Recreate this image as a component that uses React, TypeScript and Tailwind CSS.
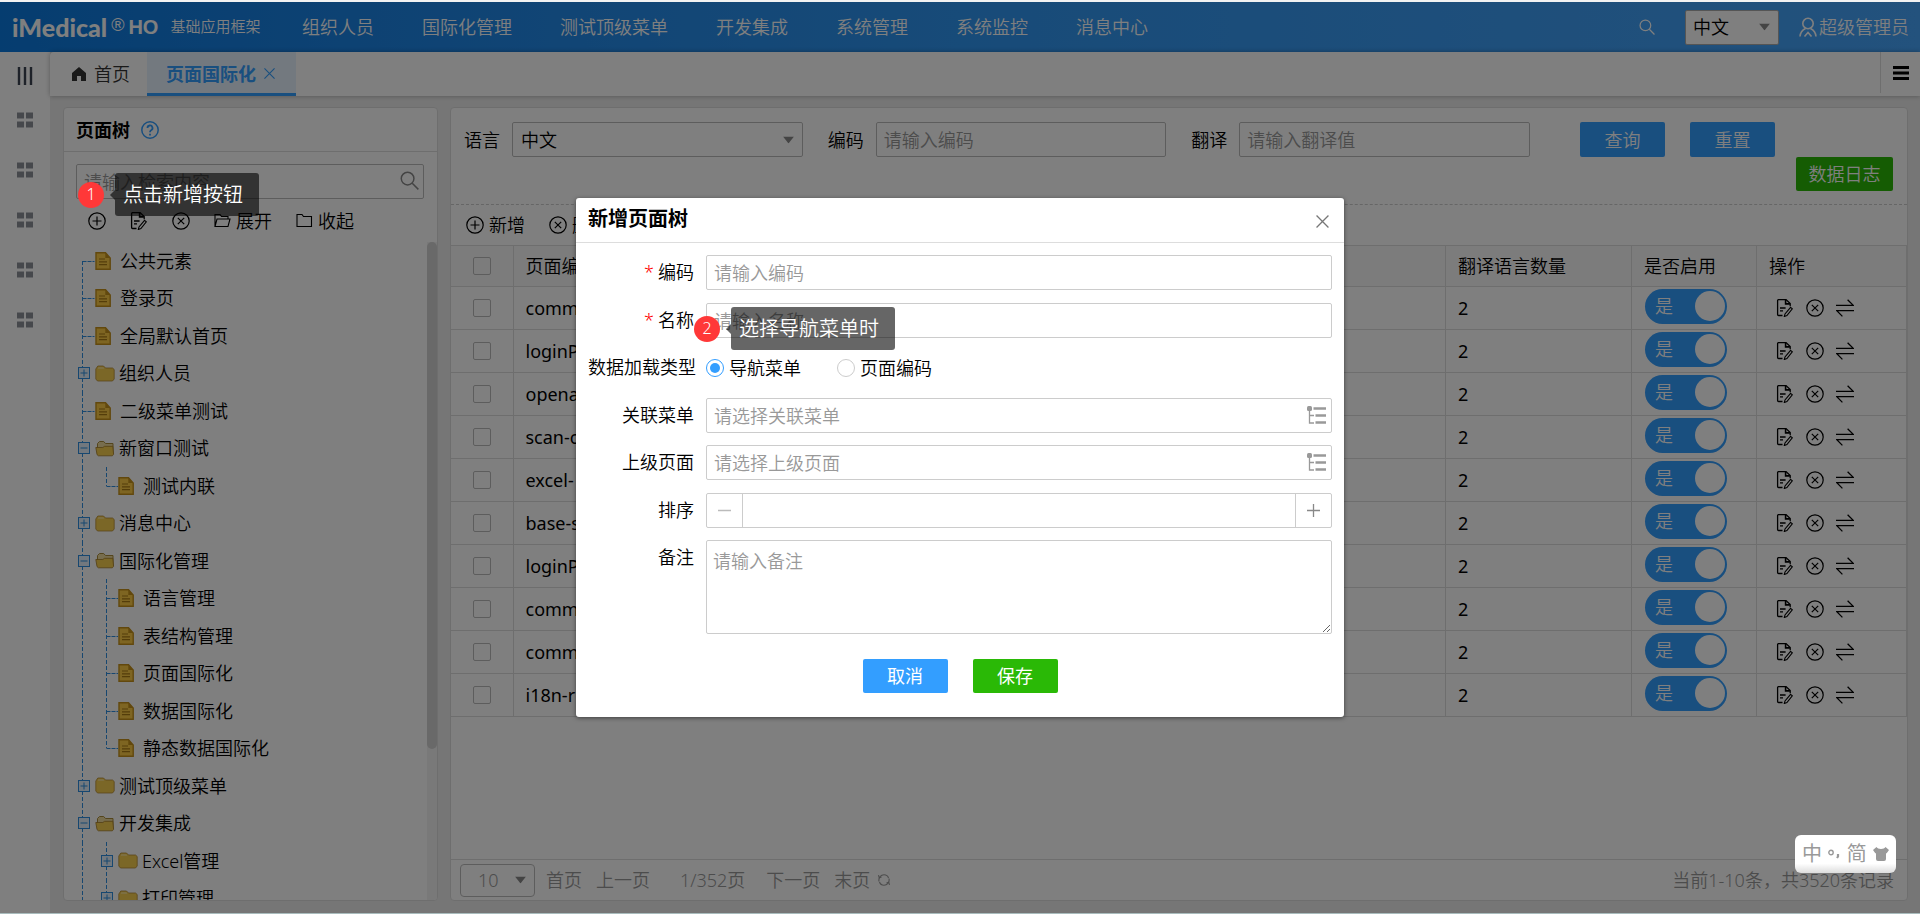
import { useState } from "react";
import type { ReactNode } from "react";

type TreeItem = {
  label: string;
  depth: 0 | 1;
  kind: "doc" | "closed" | "open";
  first?: boolean;
  last?: boolean;
};

const navItems = ["组织人员", "国际化管理", "测试顶级菜单", "开发集成", "系统管理", "系统监控", "消息中心"];

const treeItems: TreeItem[] = [
  { label: "公共元素", depth: 0, kind: "doc", first: true },
  { label: "登录页", depth: 0, kind: "doc" },
  { label: "全局默认首页", depth: 0, kind: "doc" },
  { label: "组织人员", depth: 0, kind: "closed" },
  { label: "二级菜单测试", depth: 0, kind: "doc" },
  { label: "新窗口测试", depth: 0, kind: "open" },
  { label: "测试内联", depth: 1, kind: "doc", last: true },
  { label: "消息中心", depth: 0, kind: "closed" },
  { label: "国际化管理", depth: 0, kind: "open" },
  { label: "语言管理", depth: 1, kind: "doc" },
  { label: "表结构管理", depth: 1, kind: "doc" },
  { label: "页面国际化", depth: 1, kind: "doc" },
  { label: "数据国际化", depth: 1, kind: "doc" },
  { label: "静态数据国际化", depth: 1, kind: "doc", last: true },
  { label: "测试顶级菜单", depth: 0, kind: "closed" },
  { label: "开发集成", depth: 0, kind: "open" },
  { label: "Excel管理", depth: 1, kind: "closed" },
  { label: "打印管理", depth: 1, kind: "closed" },
];

const rows = ["comm", "loginP", "opena", "scan-c", "excel-", "base-s", "loginP", "comm", "comm", "i18n-r"];

function PlusCircle() {
  return (
    <svg aria-hidden="true" viewBox="0 0 18 18" className="h-[18px] w-[18px] shrink-0" fill="none" stroke="currentColor" strokeWidth="1.2">
      <circle cx="9" cy="9" r="8.2" />
      <path d="M9 4.5v9M4.5 9h9" />
    </svg>
  );
}

function CrossCircle() {
  return (
    <svg aria-hidden="true" viewBox="0 0 18 18" className="h-[18px] w-[18px] shrink-0" fill="none" stroke="currentColor" strokeWidth="1.2">
      <circle cx="9" cy="9" r="8.2" />
      <path d="M5.8 5.8l6.4 6.4M12.2 5.8l-6.4 6.4" />
    </svg>
  );
}

function EditIcon() {
  return (
    <svg aria-hidden="true" viewBox="0 0 18 18" className="h-[18px] w-[18px] shrink-0" fill="none" stroke="currentColor" strokeWidth="1.3">
      <path d="M6.5 16.5H2.6a1 1 0 0 1-1-1V1.6a1 1 0 0 1 1-1H10l4.2 4v2.6" />
      <path d="M9.6 .8v4.1h4.3" strokeWidth="1.6" />
      <path d="M4 9h5.6M4 11.8h3" />
      <path d="M14.6 8.4l1.7 1.5-5.4 6.6-2.6 1 .7-2.6z" strokeWidth="1.1" />
    </svg>
  );
}

function SwapIcon() {
  return (
    <svg aria-hidden="true" viewBox="0 0 18 18" className="h-[18px] w-[18px] shrink-0" fill="none" stroke="currentColor" strokeWidth="1.3">
      <path d="M0 6.4h17.3L11.6.8M18 11.6H.8l5.6 5.8" />
    </svg>
  );
}

function FolderLine({ open }: { open?: boolean }) {
  return (
    <svg aria-hidden="true" viewBox="0 0 17 15" className="h-[15px] w-[17px] shrink-0" fill="none" stroke="currentColor" strokeWidth="1.1">
      {open ? (
        <path d="M1 13.5V1.5h5l1.5 2h6.5v2.5M1 13.5l2-7.5h13l-2 7.5z" />
      ) : (
        <path d="M1 13.5V1.5h5l1.5 2H15.5v10z" />
      )}
    </svg>
  );
}

function SearchIcon({ className }: { className: string }) {
  return (
    <svg aria-hidden="true" viewBox="0 0 18 18" className={className} fill="none" stroke="currentColor" strokeWidth="1.4">
      <circle cx="7.2" cy="7.2" r="6" />
      <path d="M11.6 11.6l5.8 5.8" />
    </svg>
  );
}

function CloseIcon({ className }: { className: string }) {
  return (
    <svg aria-hidden="true" viewBox="0 0 12 12" className={className} fill="none" stroke="currentColor" strokeWidth="1.2">
      <path d="M.5.5l11 11M11.5.5l-11 11" />
    </svg>
  );
}

function GridIcon() {
  return (
    <svg aria-hidden="true" viewBox="0 0 16 16" className="h-4 w-4" fill="currentColor">
      <path d="M0 .5h7v6H0zM9 .5h7v6H9zM0 9.5h7v6H0zM9 9.5h7v6H9z" />
    </svg>
  );
}

function Caret({ className }: { className?: string }) {
  return (
    <svg aria-hidden="true" viewBox="0 0 11 7" className={`pointer-events-none absolute top-1/2 h-[7px] w-[11px] -translate-y-1/2 ${className ?? ""}`}>
      <path d="M0 0h11L5.5 7z" fill="#888" />
    </svg>
  );
}

function TreeSelectIcon() {
  return (
    <svg aria-hidden="true" viewBox="0 0 20 20" className="h-5 w-5" fill="none" stroke="#999">
      <rect x="0" y="1" width="5" height="5" rx="1.5" fill="#999" stroke="none" />
      <path d="M2.5 4v14H7M2.5 10.5H7" strokeWidth="1.3" />
      <path d="M6.5 3.5H19M8.5 10.5H19M8.5 17.5H19" strokeWidth="2.6" />
    </svg>
  );
}

// dashed guide lines and the +/- box in front of a tree node
function TreeGuide({ item }: { item: TreeItem }) {
  const x = item.depth === 0 ? 6.5 : 30.5;
  const boxX = item.depth === 0 ? 2.5 : 25.5;
  const width = item.depth === 0 ? "w-[19px]" : "w-[42px]";
  return (
    <svg aria-hidden="true" className={`h-full shrink-0 ${width}`} fill="none" stroke="#2f8fe0">
      <path d={item.first ? "M6.5 19V38" : "M6.5 0V38"} strokeDasharray="4 2" />
      {item.depth === 1 && <path d={item.last ? "M30.5 0V19" : "M30.5 0V38"} strokeDasharray="4 2" />}
      {item.kind === "doc" ? (
        <path d={`M${x} 19.5h12`} strokeDasharray="4 1" />
      ) : (
        <>
          <rect x={boxX} y="13.5" width="11" height="11" fill="#e4f1fd" />
          <path d={`M${boxX + 2} 19h7`} />
          {item.kind === "closed" && <path d={`M${boxX + 5.5} 15.5v7`} />}
        </>
      )}
    </svg>
  );
}

function DocIcon() {
  return (
    <svg aria-hidden="true" viewBox="0 0 16 18" className="mr-[9px] h-[18px] w-4 shrink-0">
      <path d="M1 .8h9.5L15.2 6v11.2H1z" fill="#fccb45" stroke="#c4901a" strokeWidth="1.4" />
      <path d="M10.3 1v5H15z" fill="#c4901a" />
      <path d="M4 7h6M4 9.8h8M4 12.6h8" stroke="#a87a14" strokeWidth="1.2" />
    </svg>
  );
}

function FolderIcon({ open }: { open: boolean }) {
  return (
    <svg aria-hidden="true" viewBox="0 0 20 17" className="mr-1 h-[17px] w-5 shrink-0">
      {open ? (
        <>
          <path d="M2.5 8V3.5l2-2h4.2l1.8 2h7.5V14" fill="#efdb9c" stroke="#a88a3a" />
          <path d="M.8 7.5h7l1.8-1.2h8.2l.8 8-1.2 1.5H3.4L2 14.6z" fill="#f7ce4e" stroke="#a57c28" strokeWidth=".8" />
        </>
      ) : (
        <>
          <path d="M.8 4l2-3h5.700L10.5 3H17.500l1.7 1.5V14L17.500 16H2.500L.8 14z" fill="#f7ce4e" stroke="#b48a35" strokeWidth=".8" />
          <path d="M3.3 2.6h5l1 1H2.800z" fill="#fff0b8" />
        </>
      )}
    </svg>
  );
}

function Callout({ n, children, className }: { n: number; children: ReactNode; className: string }) {
  return (
    <div className={`pointer-events-none absolute z-20 flex items-center ${className}`}>
      <span className="flex h-[26px] w-[26px] items-center justify-center rounded-full bg-[#ff3838] pb-0.5 text-base leading-none font-[350] text-white">
        {n}
      </span>
      <svg aria-hidden="true" viewBox="0 0 5 10" className="ml-1.5 h-2.5 w-[5px]">
        <path d="M5 0v10L0 5z" fill="#000" fillOpacity=".6" />
      </svg>
      <span className="h-[43px] rounded-[3px] bg-black/60 pr-4 pl-2 text-xl leading-[43px] whitespace-nowrap text-white">
        {children}
      </span>
    </div>
  );
}

function Header() {
  return (
    <header className="flex h-[50px] shrink-0 items-center bg-linear-to-r from-[#0b7ae0] via-[#2f96f2] to-[#46a4fa] pr-[11px] pl-3 text-lg text-white">
      <div className="flex w-[290px] shrink-0 items-center whitespace-nowrap">
        <span className="font-['Lato',sans-serif] text-[25px] font-black">iMedical</span>
        <span className="mb-1 ml-1 font-['Liberation_Sans',sans-serif] text-lg">®</span>
        <span className="ml-1 font-['Liberation_Sans',sans-serif] text-xl font-bold">HO</span>
        <span className="ml-3 text-[15px]">基础应用框架</span>
      </div>
      <nav className="flex flex-1 gap-12 whitespace-nowrap">
        {navItems.map((name) => (
          <a key={name} href="#">
            {name}
          </a>
        ))}
      </nav>
      <button type="button" aria-label="搜索" className="mr-[30px]">
        <SearchIcon className="h-4 w-4" />
      </button>
      <div className="relative mr-5">
        <select aria-label="界面语言" className="h-[35px] w-[94px] appearance-none rounded-xs border border-[#aaa] bg-white pl-[7px] text-black">
          <option>中文</option>
        </select>
        <Caret className="right-[9px]" />
      </div>
      <a href="#" className="flex items-center gap-0.5">
        <svg aria-hidden="true" viewBox="0 0 18 20" className="h-5 w-[18px]" fill="none" stroke="currentColor" strokeWidth="1.6">
          <circle cx="9" cy="6.5" r="5.2" />
          <path d="M6.5 11.5C3.5 13 1.3 15.5 1 19.5M11.5 11.5c3 1.5 5.2 4 5.5 8M5.5 19.5L9 15.5l3.5 4" />
        </svg>
        超级管理员
      </a>
    </header>
  );
}

function SideBar() {
  return (
    <aside className="flex w-[50px] shrink-0 flex-col items-center bg-white pt-[15px] text-[#8d9199]">
      <button type="button" aria-label="展开菜单" className="mb-[27px] text-[#3d4452]">
        <svg aria-hidden="true" viewBox="0 0 16 18" className="h-[18px] w-4" stroke="currentColor" strokeWidth="2.4">
          <path d="M2 0v18M8 0v18M14 0v18" />
        </svg>
      </button>
      <div className="flex flex-col gap-[34px]">
        {[1, 2, 3, 4, 5].map((n) => (
          <button key={n} type="button" aria-label={`菜单${n}`}>
            <GridIcon />
          </button>
        ))}
      </div>
    </aside>
  );
}

function TabBar() {
  return (
    <div className="flex h-11 shrink-0 rounded-tl bg-white text-lg shadow-[0_0_5px_rgba(0,0,0,0.3)]">
      <div className="flex w-[97px] items-center gap-2 pl-[22px] text-[#333]">
        <svg aria-hidden="true" viewBox="0 0 14 14" className="h-[14px] w-[14px]" fill="currentColor">
          <path d="M7 0l7 6v8H9V9H5v5H0V6z" />
        </svg>
        <a href="#">首页</a>
      </div>
      <div className="flex w-[149px] items-center border-b-3 border-[#339eff] bg-[#e6f3ff] pl-[19px] text-[#339eff]">
        <a href="#" className="pt-[3px] font-bold">
          页面国际化
        </a>
        <button type="button" aria-label="关闭标签" className="ml-2 pt-0.5">
          <CloseIcon className="h-[11px] w-[11px]" />
        </button>
      </div>
      <button type="button" aria-label="标签菜单" className="mb-[3px] ml-auto flex w-10 items-center justify-center border-l border-[#ddd]">
        <svg aria-hidden="true" viewBox="0 0 16 14" className="h-[14px] w-4" stroke="#000" strokeWidth="3">
          <path d="M0 1.5h16M0 7h16M0 12.5h16" />
        </svg>
      </button>
    </div>
  );
}

function TreePanel() {
  return (
    <section className="flex w-[375px] shrink-0 flex-col overflow-hidden rounded border border-[#ddd] bg-white">
      <div className="flex h-11 shrink-0 items-center border-b border-[#ddd] pl-3">
        <h2 className="text-lg font-bold">页面树</h2>
        <svg aria-hidden="true" viewBox="0 0 18 18" className="ml-[11px] h-[18px] w-[18px]" fill="none" stroke="#339eff" strokeWidth="1.5">
          <circle cx="9" cy="9" r="8.2" />
          <path d="M6.5 7a2.5 2.5 0 1 1 3.6 2.2Q9 9.8 9 11.2M9 12.8v1.6" strokeWidth="1.8" />
        </svg>
      </div>
      <div className="relative mt-3 mr-[13px] ml-3">
        <input
          type="text"
          aria-label="检索内容"
          placeholder="请输入检索内容"
          className="h-[35px] w-full rounded-xs border border-[#bbb] pl-[7px] text-lg placeholder:text-[#999]"
        />
        <SearchIcon className="absolute top-[7px] right-[5px] h-[19px] w-[19px] text-[#888]" />
      </div>
      <div className="flex h-[43px] shrink-0 items-center pl-6 text-lg">
        <button type="button" aria-label="新增"><PlusCircle /></button>
        <button type="button" aria-label="编辑" className="ml-6"><EditIcon /></button>
        <button type="button" aria-label="删除" className="ml-6"><CrossCircle /></button>
        <button type="button" className="ml-6 flex items-center gap-[5px]"><FolderLine open />展开</button>
        <button type="button" className="ml-6 flex items-center gap-[5px]"><FolderLine />收起</button>
      </div>
      <div className="flex min-h-0 flex-1">
        <ul className="min-w-0 flex-1 overflow-hidden pl-3 text-lg">
          {treeItems.map((item) => (
            <li key={`${item.depth}-${item.label}`} className="flex items-center odd:h-[37px] even:h-[38px]">
              <TreeGuide item={item} />
              {item.kind === "doc" ? <DocIcon /> : <FolderIcon open={item.kind === "open"} />}
              <span className="leading-6">{item.label}</span>
            </li>
          ))}
        </ul>
        <div className="w-[10px] bg-[#f3f3f3]">
          <div className="h-[77%] rounded-full bg-[#d2d2d2]" />
        </div>
      </div>
    </section>
  );
}

function TextField({ id, label, placeholder }: { id: string; label: string; placeholder: string }) {
  return (
    <div className="flex flex-1 items-center gap-3">
      <label htmlFor={id} className="shrink-0">{label}</label>
      <input
        id={id}
        type="text"
        placeholder={placeholder}
        className="h-[35px] w-full min-w-0 rounded-xs border border-[#bbb] pl-[7px] placeholder:text-[#999]"
      />
    </div>
  );
}

function DataTable() {
  return (
    <table className="w-full table-fixed border-collapse text-left text-lg">
      <thead>
        <tr className="h-[41px] border-y border-[#ddd] bg-[#f8f8f8]">
          <th className="w-[62px] border-r border-[#ddd]">
            <input type="checkbox" aria-label="全选" className="mx-auto block h-[18px] w-[18px] appearance-none rounded-xs border border-[#bbb]" />
          </th>
          <th className="border-r border-[#ddd] pl-3 font-[350]">页面编码</th>
          <th className="w-[186px] border-r border-[#ddd] pl-3 font-[350]">翻译语言数量</th>
          <th className="w-[125px] border-r border-[#ddd] pl-3 font-[350]">是否启用</th>
          <th className="w-[150px] border-r border-[#ddd] pl-3 font-[350]">操作</th>
        </tr>
      </thead>
      <tbody>
        {rows.map((code, i) => (
          <tr key={i} className="h-[43px] border-b border-[#ddd]">
            <td className="border-r border-[#ddd]">
              <input type="checkbox" aria-label={`选择${code}`} className="mx-auto block h-[18px] w-[18px] appearance-none rounded-xs border border-[#bbb]" />
            </td>
            <td className="border-r border-[#ddd] pl-3 font-normal">{code}</td>
            <td className="border-r border-[#ddd] pl-3 font-normal">2</td>
            <td className="border-r border-[#ddd] pb-1 pl-[13px]">
              <button
                type="button"
                role="switch"
                aria-checked="true"
                className="flex h-[35px] w-[82px] items-center justify-between rounded-full bg-[#339eff] pr-0.5 pl-2.5 text-white"
              >
                是<span className="h-[30px] w-[30px] rounded-full bg-white" />
              </button>
            </td>
            <td className="border-r border-[#ddd] pl-[19px]">
              <div className="flex gap-3">
                <button type="button" aria-label="编辑"><EditIcon /></button>
                <button type="button" aria-label="删除"><CrossCircle /></button>
                <button type="button" aria-label="切换"><SwapIcon /></button>
              </div>
            </td>
          </tr>
        ))}
      </tbody>
    </table>
  );
}

function Pagination() {
  return (
    <div className="mt-auto flex h-[41px] shrink-0 items-center border-t border-[#ddd] pr-[13px] pl-[9px] text-lg text-[#999]">
      <div className="relative mr-[11px]">
        <select aria-label="每页条数" className="h-[33px] w-[75px] appearance-none rounded-sm border border-[#bbb] pl-[17px]">
          <option>10</option>
        </select>
        <Caret className="right-[9px]" />
      </div>
      <a href="#" className="mr-[14px]">首页</a>
      <a href="#" className="mr-[30px]">上一页</a>
      <span className="mr-[21px]">1/352页</span>
      <a href="#" className="mr-[14px]">下一页</a>
      <a href="#" className="mr-2">末页</a>
      <button type="button" aria-label="刷新">
        <svg aria-hidden="true" viewBox="0 0 12 12" className="h-3 w-3" fill="none" stroke="currentColor" strokeWidth="1.1">
          <path d="M1 7.5C.2 3.5 3 .8 6 .8c2.5 0 4 1.5 4.5 3.2M11 4.5c.8 4-2 6.7-5 6.7-2.5 0-4-1.5-4.5-3.2" />
          <path d="M.5 1.2l.8 2.6L3.5 3M11.5 10.8l-.8-2.6-2.2.8" />
        </svg>
      </button>
      <span className="ml-auto">当前1-10条，共3520条记录</span>
    </div>
  );
}

function DataPanel() {
  return (
    <section className="flex min-w-0 flex-1 flex-col overflow-hidden rounded border border-[#ddd] bg-white">
      <div className="flex h-[97px] shrink-0 items-start gap-[50px] border-b border-dashed border-[#ccc] pt-[14px] pr-[14px] pl-[13px] text-lg">
        <div className="flex flex-1 gap-[25px]">
          <div className="flex flex-1 items-center gap-3">
            <label htmlFor="lang" className="shrink-0">语言</label>
            <div className="relative w-full">
              <select id="lang" className="h-[35px] w-full appearance-none rounded-xs border border-[#bbb] pl-2">
                <option>中文</option>
              </select>
              <Caret className="right-[9px]" />
            </div>
          </div>
          <TextField id="code" label="编码" placeholder="请输入编码" />
          <TextField id="trans" label="翻译" placeholder="请输入翻译值" />
        </div>
        <div className="flex w-[313px] flex-wrap gap-x-[25px] text-white">
          <button type="button" className="h-[35px] w-[85px] rounded-xs bg-[#339eff]">查询</button>
          <button type="button" className="h-[35px] w-[85px] rounded-xs bg-[#339eff]">重置</button>
          <button type="button" className="ml-auto h-[34px] w-[97px] rounded-xs bg-[#2ab906]">数据日志</button>
        </div>
      </div>
      <div className="flex h-10 shrink-0 items-center gap-6 pl-[15px] text-lg">
        <button type="button" className="flex items-center gap-[5px]"><PlusCircle />新增</button>
        <button type="button" className="flex items-center gap-[5px]"><CrossCircle />删除</button>
      </div>
      <DataTable />
      <Pagination />
    </section>
  );
}

function FormRow({ id, label, required, children }: { id?: string; label: string; required?: boolean; children: ReactNode }) {
  return (
    <div className="flex items-start odd:mb-[13px] even:mb-3">
      <label htmlFor={id} className="mr-3 w-[106px] shrink-0 text-right leading-[35px] whitespace-nowrap">
        {required && <span className="mr-1 text-[#ff0000]">*</span>}
        {label}
      </label>
      {children}
    </div>
  );
}

const fieldClass = "h-[35px] w-full rounded-xs border border-[#ccc] pl-[7px] placeholder:text-[#999]";

function PageTreeDialog() {
  const [loadType, setLoadType] = useState("menu");

  return (
    <div role="dialog" aria-labelledby="dialog-title" className="relative w-2/5 rounded-[3px] bg-white text-lg shadow-[0_1px_4px_rgba(0,0,0,0.5)]">
      <div className="flex h-[45px] items-center justify-between border-b border-[#ddd] pr-[15px] pb-0.5 pl-3">
        <h2 id="dialog-title" className="text-xl font-bold">新增页面树</h2>
        <button type="button" aria-label="关闭" className="pt-1 text-[#777]">
          <CloseIcon className="h-[13px] w-[13px]" />
        </button>
      </div>
      <form className="pt-3 pr-3 pl-3">
        <FormRow id="f-code" label="编码" required>
          <input id="f-code" type="text" placeholder="请输入编码" className={fieldClass} />
        </FormRow>
        <FormRow id="f-name" label="名称" required>
          <input id="f-name" type="text" placeholder="请输入名称" className={fieldClass} />
        </FormRow>
        <FormRow label="数据加载类型">
          <div className="flex h-[35px] items-center gap-9">
            {[
              ["menu", "导航菜单"],
              ["page", "页面编码"],
            ].map(([value, text]) => (
              <label key={value} className="flex items-center gap-[5px]">
                <input
                  type="radio"
                  name="loadType"
                  checked={loadType === value}
                  onChange={() => setLoadType(value)}
                  className="h-[18px] w-[18px] appearance-none rounded-full border border-[#ccc] p-[3px] checked:border-[#339eff] checked:bg-[#339eff] checked:bg-clip-content"
                />
                {text}
              </label>
            ))}
          </div>
        </FormRow>
        <FormRow id="f-menu" label="关联菜单">
          <div className="relative w-full">
            <input id="f-menu" type="text" placeholder="请选择关联菜单" className={fieldClass} />
            <span className="absolute top-[7px] right-[5px]"><TreeSelectIcon /></span>
          </div>
        </FormRow>
        <FormRow id="f-parent" label="上级页面">
          <div className="relative w-full">
            <input id="f-parent" type="text" placeholder="请选择上级页面" className={fieldClass} />
            <span className="absolute top-[7px] right-[5px]"><TreeSelectIcon /></span>
          </div>
        </FormRow>
        <FormRow id="f-sort" label="排序">
          <div className="flex h-[35px] w-full rounded-xs border border-[#ccc] text-[#888]">
            <button type="button" aria-label="减少" className="flex w-9 items-center justify-center border-r border-[#ccc] text-[#bbb]">
              <svg aria-hidden="true" viewBox="0 0 13 13" className="h-[13px] w-[13px]" stroke="currentColor" strokeWidth="1.5"><path d="M0 6.5h13" /></svg>
            </button>
            <input id="f-sort" type="text" className="min-w-0 flex-1 px-2" />
            <button type="button" aria-label="增加" className="flex w-9 items-center justify-center border-l border-[#ccc]">
              <svg aria-hidden="true" viewBox="0 0 13 13" className="h-[13px] w-[13px]" stroke="currentColor" strokeWidth="1.3"><path d="M0 6.5h13M6.5 0v13" /></svg>
            </button>
          </div>
        </FormRow>
        <FormRow id="f-remark" label="备注">
          <textarea id="f-remark" placeholder="请输入备注" className="block h-[94px] w-full rounded-xs border border-[#ccc] px-1.5 py-[7px] leading-[26px] placeholder:text-[#999]" />
        </FormRow>
        <div className="flex justify-center gap-[25px] pt-3 pb-6 text-white">
          <button type="button" className="h-[34px] w-[85px] rounded-xs bg-[#339eff] font-normal">取消</button>
          <button type="button" className="h-[34px] w-[85px] rounded-xs bg-[#2ab906] font-normal">保存</button>
        </div>
      </form>
      <Callout n={2} className="top-[109px] left-[118px]">选择导航菜单时</Callout>
    </div>
  );
}

function InputMethodBar() {
  return (
    <div className="absolute right-6 bottom-10 z-20 flex h-[38px] w-[101px] items-center justify-between rounded-md bg-linear-to-b from-white from-75% to-[#ddd] px-[7px] text-xl font-normal text-[#999]">
      <span>中</span>
      <svg aria-hidden="true" viewBox="0 0 12 10" className="h-2.5 w-3" fill="none" stroke="currentColor" strokeWidth="1.4">
        <circle cx="3" cy="3.5" r="2.2" />
        <path d="M10 5v2.5L9 9" strokeWidth="2.2" />
      </svg>
      <span>简</span>
      <svg aria-hidden="true" viewBox="0 0 16 14" className="h-[14px] w-4" fill="currentColor">
        <path d="M3.5 0c1 2.5 8 2.5 9 0L16 3l-2.5 3.5-.5-.5v6q0 2-2 2H5q-2 0-2-2V6l-.5.5L0 3z" />
      </svg>
    </div>
  );
}

export default function App() {
  return (
    <div className="relative flex h-screen flex-col overflow-hidden border-t-2 border-b border-t-[#f2f2f2] border-b-[#a9bcbd] bg-[#ececec] font-['Noto_Sans','Noto_Sans_CJK_SC',sans-serif] font-[350] text-black">
      <Header />
      <div className="flex min-h-0 flex-1">
        <SideBar />
        <div className="flex min-w-0 flex-1 flex-col">
          <TabBar />
          <main className="flex min-h-0 flex-1 gap-3 pt-[11px] pr-3 pb-3 pl-[13px]">
            <TreePanel />
            <DataPanel />
          </main>
        </div>
      </div>
      <div className="absolute inset-0 z-10 flex items-center justify-center bg-black/50">
        <PageTreeDialog />
      </div>
      <Callout n={1} className="top-[171px] left-[78px]">点击新增按钮</Callout>
      <InputMethodBar />
    </div>
  );
}
